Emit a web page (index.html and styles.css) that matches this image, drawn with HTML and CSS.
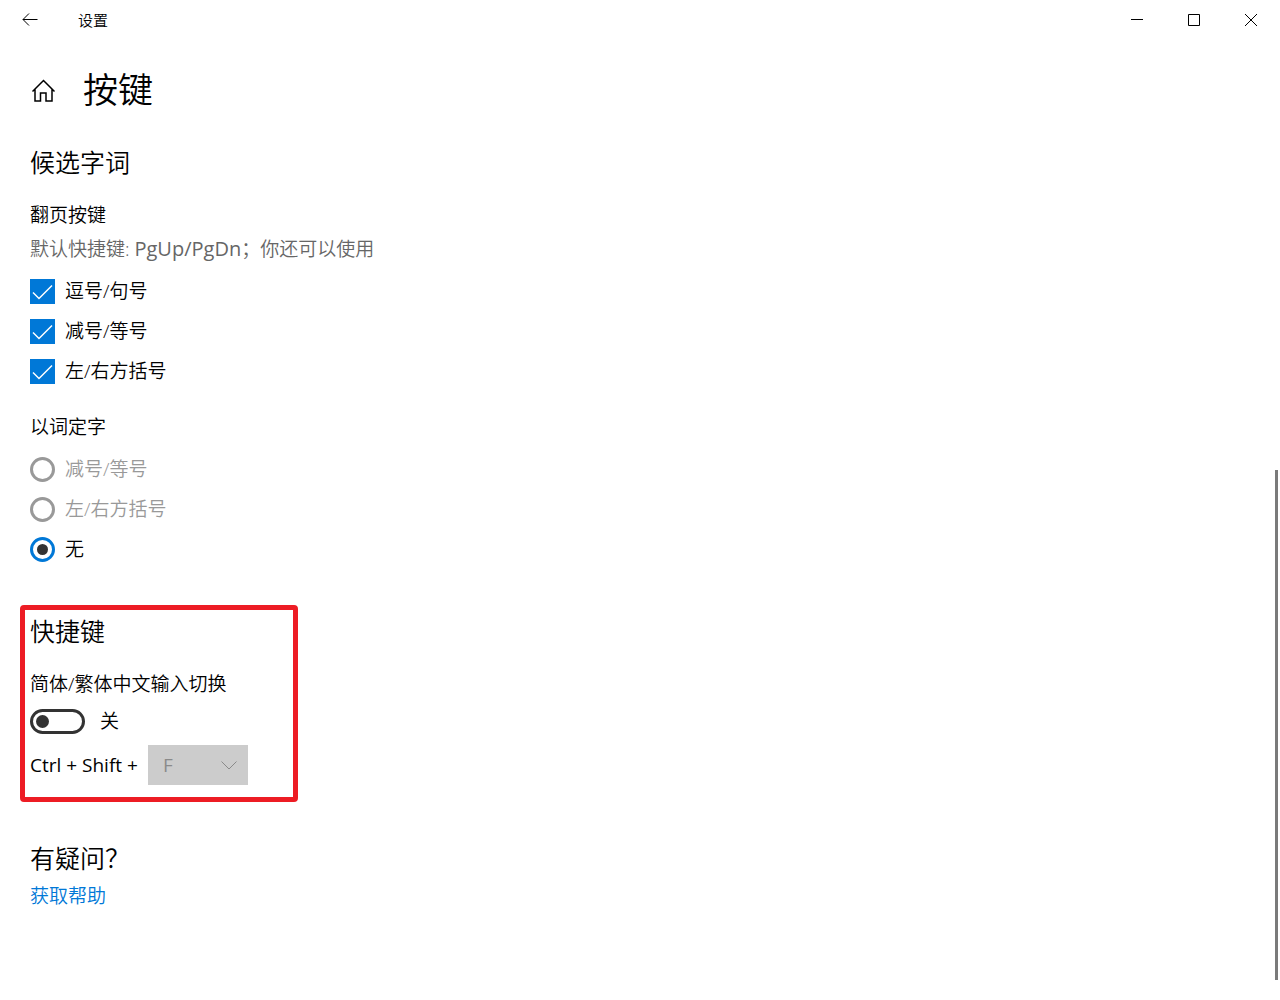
FILE: index.html
```html
<!DOCTYPE html>
<html lang="zh-CN">
<head>
<meta charset="utf-8">
<meta name="viewport" content="width=device-width, initial-scale=1">
<title>设置</title>
<link rel="stylesheet" href="styles.css">
</head>
<body>
<header class="titlebar">
  <button class="back" type="button" aria-label="返回">
    <svg width="16" height="14" viewBox="0 0 16 14"><path d="M15.5 6.5H1M7 .5l-6 6 6 6"/></svg>
  </button>
  <span class="app-name">设置</span>
  <div class="window-controls">
    <button type="button" aria-label="最小化"><svg width="14" height="14" viewBox="0 0 14 14"><path d="M0 6.5h12"/></svg></button>
    <button type="button" aria-label="最大化"><svg width="14" height="14" viewBox="0 0 14 14"><path d="M.5 1.500h11v11h-11z"/></svg></button>
    <button type="button" aria-label="关闭"><svg width="14" height="14" viewBox="0 0 14 14"><path d="M0 1l12 12M12 1l-12 12"/></svg></button>
  </div>
</header>
<main class="content">
  <div class="page-head">
    <a class="home" href="#" aria-label="主页">
      <svg width="26" height="26" viewBox="0 0 26 26"><path d="M2.500 14.500L13.500 3.500l11 11M5 12.500V24h5.500v-8h5.500v8h6V12.500"/></svg>
    </a>
    <h1>按键</h1>
  </div>

  <section>
    <h2>候选字词</h2>
    <h3>翻页按键</h3>
    <p class="hint">默认快捷键: <kbd>PgUp/PgDn</kbd>；你还可以使用</p>
    <div class="options">
      <label class="option"><span class="check"><input type="checkbox" checked><svg width="25" height="25" viewBox="0 0 25 25"><path d="M3 13.500l6 6L22 6.500"/></svg></span>逗号/句号</label>
      <label class="option"><span class="check"><input type="checkbox" checked><svg width="25" height="25" viewBox="0 0 25 25"><path d="M3 13.500l6 6L22 6.500"/></svg></span>减号/等号</label>
      <label class="option"><span class="check"><input type="checkbox" checked><svg width="25" height="25" viewBox="0 0 25 25"><path d="M3 13.500l6 6L22 6.500"/></svg></span>左/右方括号</label>
    </div>
    <h3>以词定字</h3>
    <div class="options">
      <label class="option disabled"><input class="radio" type="radio" name="pick" disabled>减号/等号</label>
      <label class="option disabled"><input class="radio" type="radio" name="pick" disabled>左/右方括号</label>
      <label class="option"><input class="radio" type="radio" name="pick" checked>无</label>
    </div>
  </section>

  <section class="highlight">
    <h2>快捷键</h2>
    <h3 id="switch-title">简体/繁体中文输入切换</h3>
    <label class="switch-row"><input class="switch" type="checkbox" role="switch" aria-labelledby="switch-title">关</label>
    <div class="shortcut">
      <label for="key">Ctrl + Shift +</label>
      <span class="select">
        <select id="key" disabled><option>F</option></select>
        <svg width="16" height="9" viewBox="0 0 16 9"><path d="M.5 .5L8 8l7.500-7.500"/></svg>
      </span>
    </div>
  </section>

  <section class="help">
    <h2>有疑问？</h2>
    <a class="link" href="#">获取帮助</a>
  </section>
</main>
<div class="scroll-thumb"></div>
</body>
</html>
```
FILE: styles.css
```css
* { box-sizing: border-box; }
body {
  margin: 0;
  min-height: 100vh;
  background: #fff;
  color: #000;
  font: 350 19px/24px "Open Sans", "Noto Sans CJK SC", sans-serif;
}
h1, h2, h3, p { margin: 0; font-weight: inherit; }
svg { display: block; fill: none; stroke: currentColor; }
button { padding: 0; border: 0; background: none; color: inherit; }

.titlebar { display: flex; align-items: center; height: 40px; }
.back { display: grid; place-items: center; width: 60px; height: 40px; }
.app-name { margin-left: 18px; font-size: 15px; }
.window-controls { display: flex; margin-left: auto; }
.window-controls button { display: grid; place-items: center; width: 57px; height: 40px; }

.content { padding: 0 30px 40px; }
.page-head { display: flex; align-items: center; gap: 27px; height: 106px; padding-bottom: 6px; }
.home { color: #000; }
.home svg { stroke-width: 1.5; }
h1 { font-size: 35px; line-height: 48px; }
h2 { font-size: 25px; line-height: 32px; }
h3 { margin-top: 25px; font-size: 19px; line-height: 24px; }
.options + h3 { margin-top: 24px; }
.hint { margin-top: 10px; color: #666; }
kbd { font-family: inherit; font-size: 20px; font-weight: 400; line-height: 20px; }

.options { margin-top: 10px; }
.option { display: flex; align-items: center; gap: 10px; width: fit-content; height: 40px; }
.disabled { color: #999; }
.check { display: grid; }
.check input, .check svg { grid-area: 1 / 1; }
.check input { appearance: none; width: 25px; height: 25px; margin: 0; border: 2px solid #333; }
.check input:checked { border: 0; background: #0078d7; }
.check svg { color: #fff; stroke-width: 1.5; visibility: hidden; pointer-events: none; }
.check input:checked + svg { visibility: visible; }
.radio {
  appearance: none;
  display: grid;
  place-items: center;
  width: 25px;
  height: 25px;
  margin: 0;
  border: 3px solid #333;
  border-radius: 50%;
}
.radio:disabled { border-color: #999; }
.radio:checked { border-color: #0078d7; }
.radio:checked::before { content: ""; width: 11px; height: 11px; border-radius: 50%; background: #333; }

.highlight {
  width: fit-content;
  min-width: 278px;
  margin: 36px 0 0 -10px;
  padding: 5px 5px 12px;
  border: 5px solid #ed1c24;
  border-radius: 4px;
}
.switch-row { display: flex; align-items: center; gap: 15px; width: fit-content; height: 40px; margin: 5px 0 4px; }
.switch {
  appearance: none;
  display: flex;
  align-items: center;
  width: 55px;
  height: 25px;
  margin: 0;
  padding-left: 3px;
  border: 3px solid #333;
  border-radius: 13px;
}
.switch::before { content: ""; width: 13px; height: 13px; border-radius: 50%; background: #333; }
.switch:checked { justify-content: flex-end; padding: 0 3px; }
.shortcut { display: flex; align-items: center; gap: 10px; font-weight: 400; }
.select { display: grid; align-items: center; color: #8a8a8a; }
.select select, .select svg { grid-area: 1 / 1; }
.select select {
  appearance: none;
  width: 100px;
  height: 40px;
  padding: 0 15px;
  border: 0;
  border-radius: 0;
  background: #ccc;
  color: inherit;
  font: inherit;
  opacity: 1;
}
.select svg { justify-self: end; margin-right: 11px; pointer-events: none; }

.help { margin-top: 40px; }
.link { display: block; width: fit-content; margin-top: 10px; color: #0078d7; text-decoration: none; }
.scroll-thumb { position: fixed; top: 47%; right: 2px; bottom: 20px; width: 3px; background: #7a7a7a; }
```
